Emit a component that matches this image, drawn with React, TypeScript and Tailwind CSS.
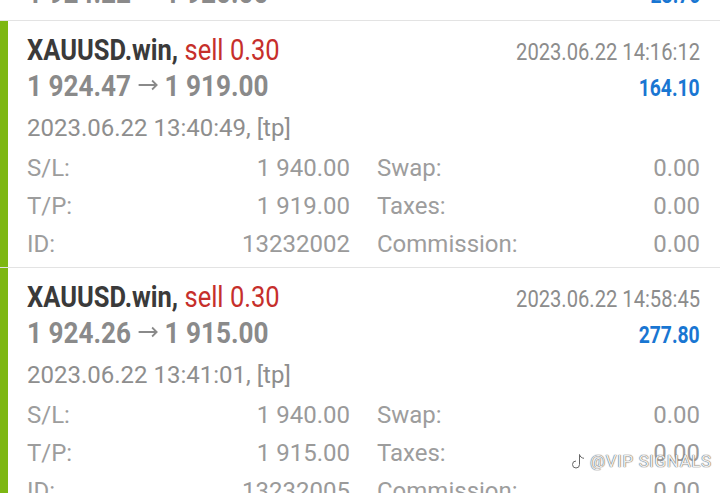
const deals = [
  {
    open: '1 924.47',
    close: '1 919.00',
    closeTime: '2023.06.22 14:16:12',
    profit: '164.10',
    openTime: '2023.06.22 13:40:49, [tp]',
    sl: '1 940.00',
    tp: '1 919.00',
    id: '13232002',
  },
  {
    open: '1 924.26',
    close: '1 915.00',
    closeTime: '2023.06.22 14:58:45',
    profit: '277.80',
    openTime: '2023.06.22 13:41:01, [tp]',
    sl: '1 940.00',
    tp: '1 915.00',
    id: '13232005',
  },
];

function Cell({ label, value }: { label: string; value: string }) {
  return (
    <div className="flex items-baseline justify-between h-[38px] leading-[38px]">
      <span className="text-[#9d9d9d]">{label}</span>
      <span className="text-[#9a9a9a]">{value}</span>
    </div>
  );
}

function Prices({ open, close }: { open: string; close: string }) {
  return (
    <span className="inline-block origin-left scale-x-[0.9] whitespace-nowrap text-[29px] font-bold text-[#8a8a8a]">
      {open}{' '}
      <svg width="23" height="12" viewBox="0 0 23 12" fill="none" stroke="#8a8a8a" strokeWidth="2" className="inline-block align-[5px]">
        <path d="M1 6h20M16 1.5l5 4.5-5 4.5" />
      </svg>{' '}
      {close}
    </span>
  );
}

export default function App() {
  return (
    <div className="relative w-[720px] h-[493px] overflow-hidden bg-white font-['Roboto',sans-serif]">
      {/* previous deal, cut off at the top */}
      <div className="h-[21px] overflow-hidden border-b border-[#e3e3e3]">
        <div className="flex items-baseline justify-between pl-[27px] pr-[20px] -mt-[24px] leading-[34px]">
          <Prices open="1 924.22" close="1 920.00" />
          <span className="inline-block origin-right scale-x-[0.84] text-[23px] font-bold text-[#1976d2]">23.70</span>
        </div>
      </div>

      {deals.map((d) => (
        <div key={d.id} className="flex border-b border-[#e3e3e3]">
          <div className="w-[8px] shrink-0 bg-[#7db713]" />
          <div className="flex-1 pl-[19px] pr-[20px] pt-[12px] pb-[4px]">
            <div className="flex items-baseline justify-between leading-[34px]">
              <span className="inline-block origin-left scale-x-[0.88] whitespace-nowrap text-[29px]">
                <span className="font-bold text-[#3a3a3a]">XAUUSD.win, </span>
                <span className="text-[#c62f2b]">sell 0.30</span>
              </span>
              <span className="inline-block origin-right scale-x-[0.84] text-[24px] text-[#8c8c8c]">{d.closeTime}</span>
            </div>
            <div className="flex items-baseline justify-between leading-[34px]">
              <Prices open={d.open} close={d.close} />
              <span className="inline-block origin-right scale-x-[0.84] text-[23px] font-bold text-[#1976d2]">{d.profit}</span>
            </div>
            <div className="mt-[3px] h-[38px] leading-[38px] text-[24px] text-[#8e8e8e]">{d.openTime}</div>
            <div className="mt-[2px] grid grid-cols-2 gap-x-[27px] text-[24px]">
              <Cell label="S/L:" value={d.sl} />
              <Cell label="Swap:" value="0.00" />
              <Cell label="T/P:" value={d.tp} />
              <Cell label="Taxes:" value="0.00" />
              <Cell label="ID:" value={d.id} />
              <Cell label="Commission:" value="0.00" />
            </div>
          </div>
        </div>
      ))}

      {/* watermark */}
      <div className="absolute left-[571px] top-[449px] flex items-center gap-[4px] text-[17px] text-white/90 [text-shadow:0_0_1px_#555,0_0_1px_#555]">
        <svg width="15" height="18" viewBox="0 0 15 18" fill="none" stroke="#666" strokeWidth="1">
          <path d="M8.5 1.5v10a3.5 3.5 0 1 1-3.5-3.5M8.5 1.5c0.5 2.2 2.2 3.6 4.5 3.8" />
        </svg>
        <span className="tracking-[0.6px]">@VIP SIGNALS</span>
      </div>
    </div>
  );
}
